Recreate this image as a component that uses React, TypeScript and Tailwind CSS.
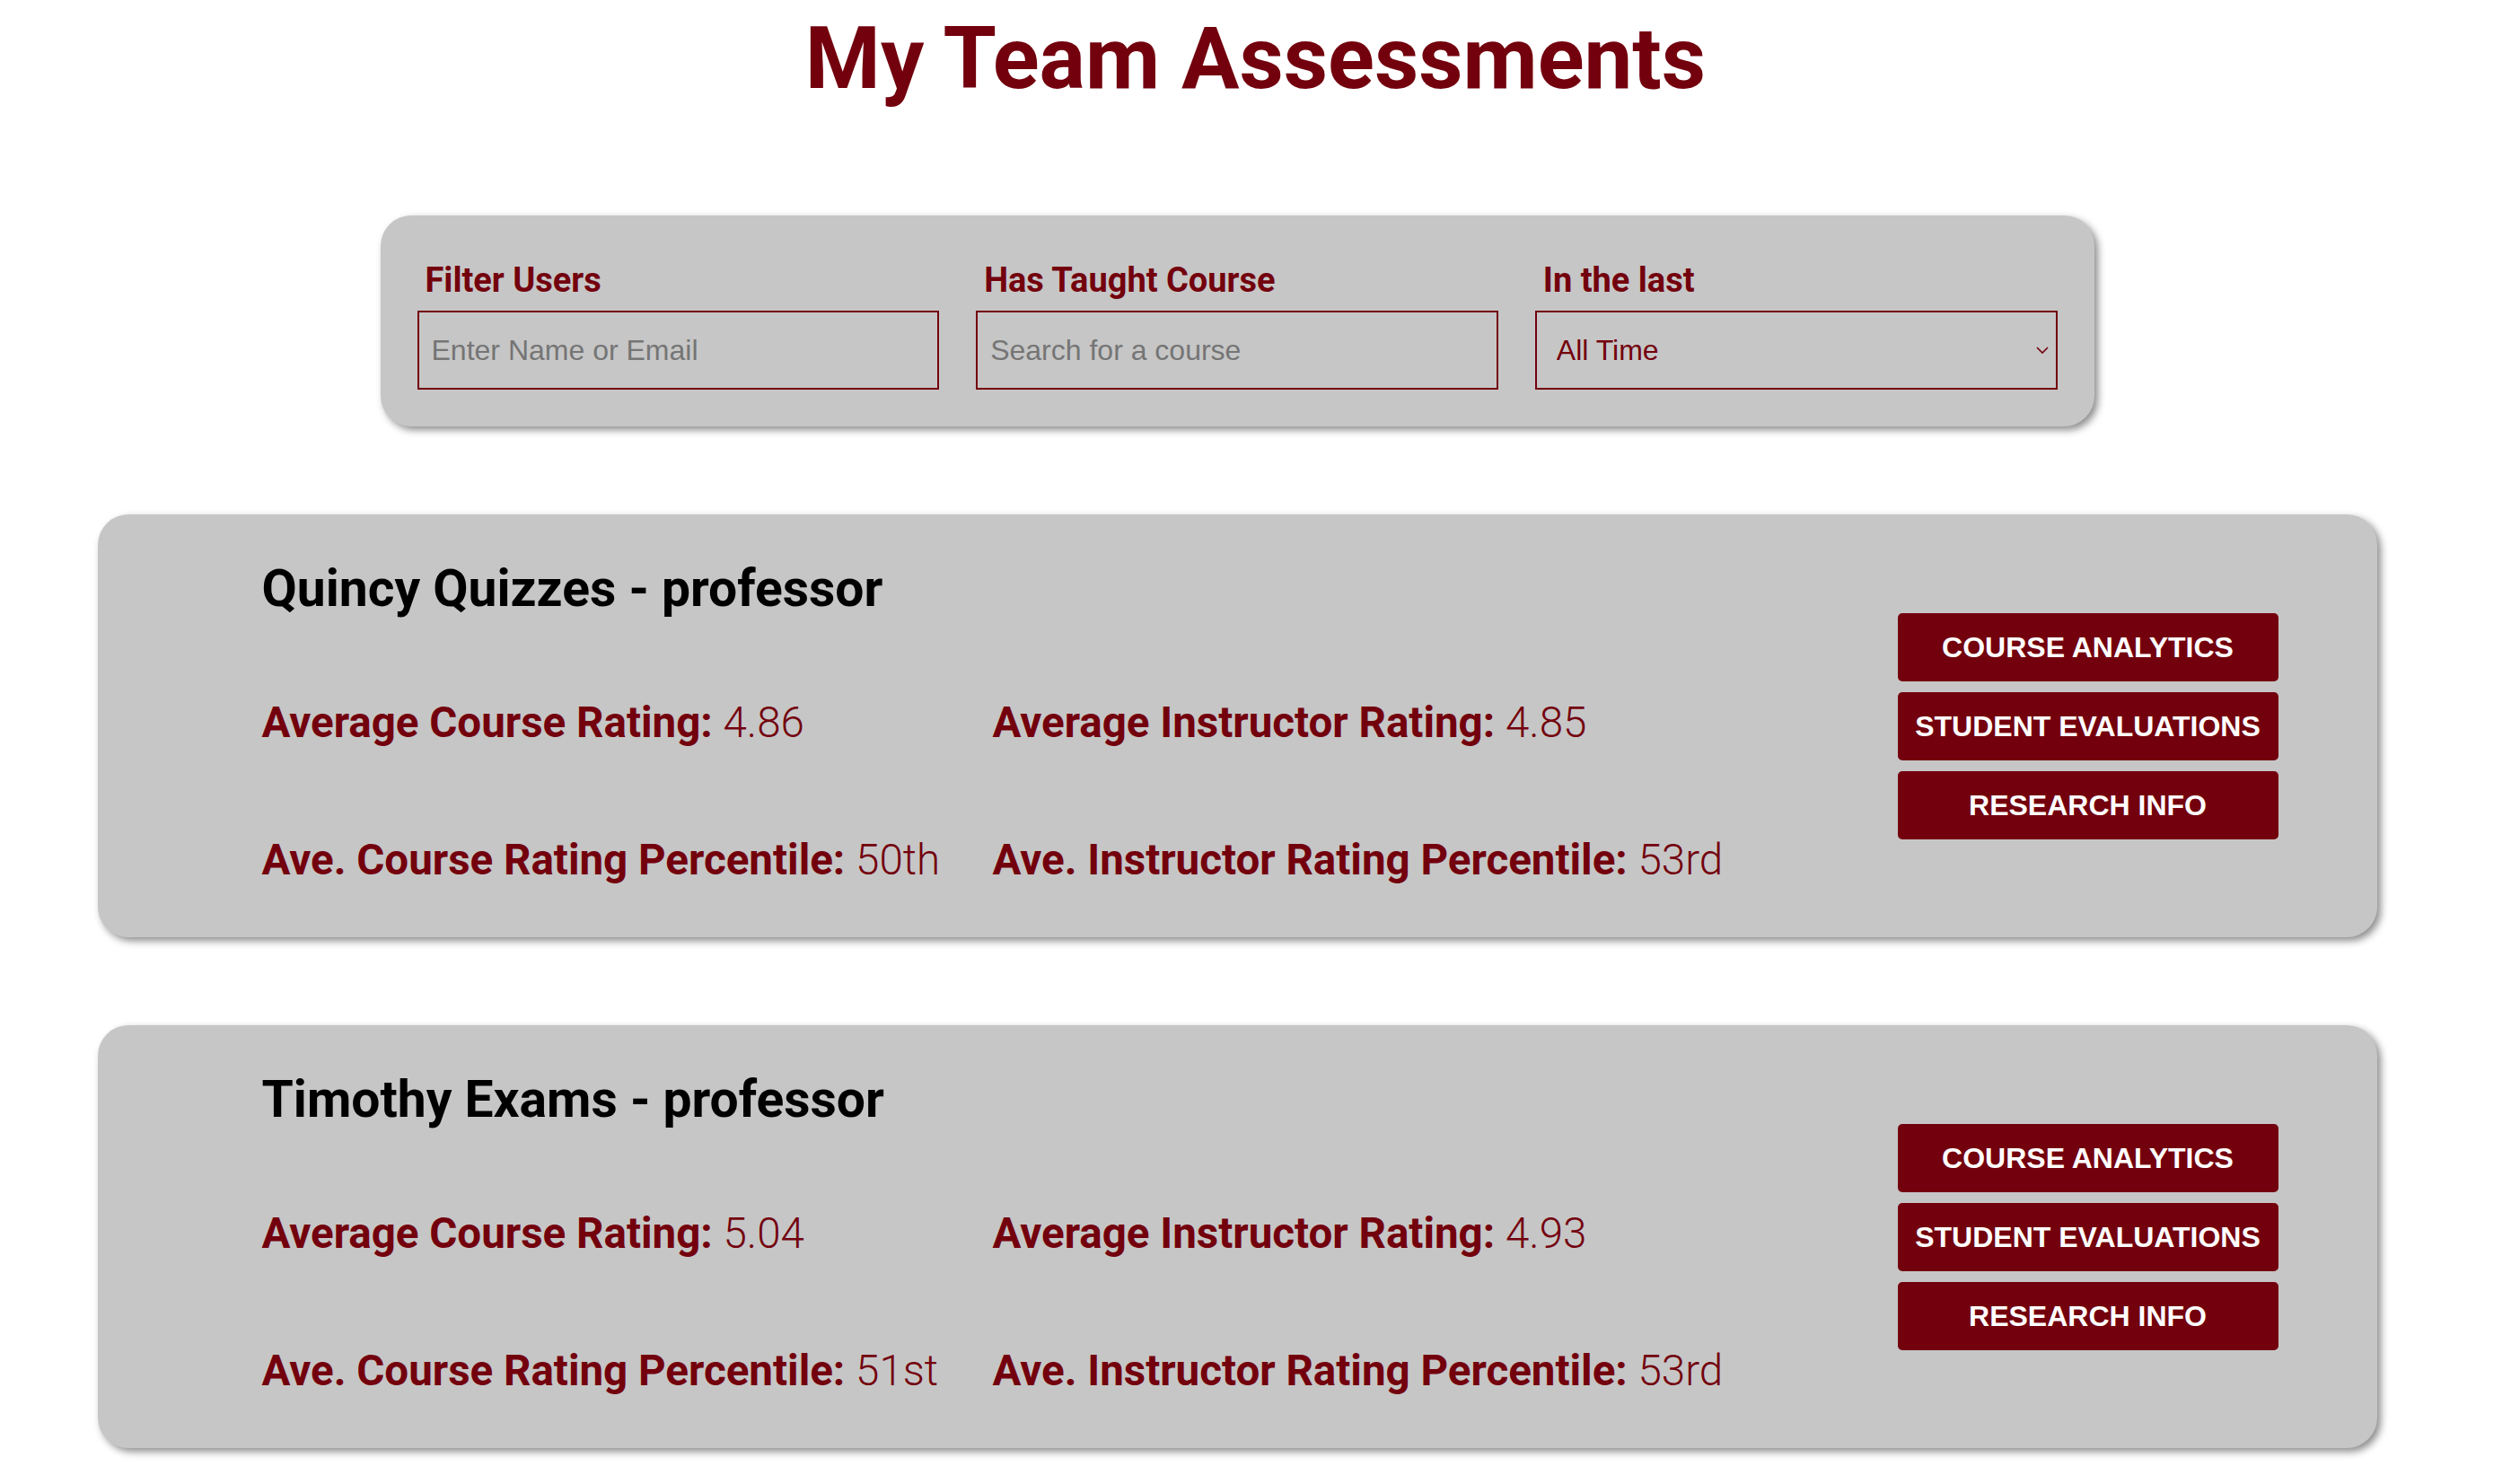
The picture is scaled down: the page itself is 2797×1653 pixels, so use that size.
import React from 'react';

interface Member {
  name: string;
  course: string;
  instructor: string;
  coursePct: string;
  instructorPct: string;
}

const members: Member[] = [
  { name: 'Quincy Quizzes - professor', course: '4.86', instructor: '4.85', coursePct: '50th', instructorPct: '53rd' },
  { name: 'Timothy Exams - professor', course: '5.04', instructor: '4.93', coursePct: '51st', instructorPct: '53rd' },
];

const Stat: React.FC<{ label: string; value: string }> = ({ label, value }) => (
  <p className="text-[47.5px] leading-none text-[#73000d] whitespace-nowrap">
    <span className="font-bold">{label}</span> <span className="font-light">{value}</span>
  </p>
);

const MemberCard: React.FC<{ member: Member }> = ({ member }) => (
  <div className="mx-auto flex h-[471px] w-[2539px] rounded-[34px] bg-[#c6c6c6] pl-[183px] pr-[110px] shadow-[4px_4px_8px_rgba(0,0,0,0.45)]">
    <div className="flex-1 pt-[54px]">
      <h2 className="text-[57px] font-bold leading-none text-black">{member.name}</h2>
      <div className="mt-[98px] grid grid-cols-[814px_auto] gap-y-[105px]">
        <Stat label="Average Course Rating:" value={member.course} />
        <Stat label="Average Instructor Rating:" value={member.instructor} />
        <Stat label="Ave. Course Rating Percentile:" value={member.coursePct} />
        <Stat label="Ave. Instructor Rating Percentile:" value={member.instructorPct} />
      </div>
    </div>
    <div className="flex flex-col gap-[12px] self-center [font-family:'Liberation_Sans',Arial,sans-serif]">
      {['Course Analytics', 'Student Evaluations', 'Research Info'].map((b) => (
        <button
          key={b}
          className="h-[76px] w-[424px] rounded-[5px] bg-[#73000d] text-[32px] font-bold uppercase text-white"
        >
          {b}
        </button>
      ))}
    </div>
  </div>
);

export default function App() {
  return (
    <div className="min-h-screen bg-white pb-[40px] [font-family:Roboto,'Liberation_Sans',sans-serif]">
      <h1 className="pt-[17px] text-center text-[96px] font-bold leading-none text-[#73000d]">
        My Team Assessments
      </h1>

      <div className="mt-[127px] flex flex-col gap-[98px] pr-[41px]">
        {/* Filters */}
        <div className="mx-auto grid w-[1909px] grid-cols-3 gap-x-[41px] rounded-[34px] bg-[#c6c6c6] px-[41px] pt-[53px] pb-[41px] shadow-[4px_4px_8px_rgba(0,0,0,0.45)]">
          <div>
            <label className="mb-[15px] ml-[9px] block text-[38px] font-bold leading-none text-[#73000d]">Filter Users</label>
            <input
              placeholder="Enter Name or Email"
              className="h-[88px] w-full border-2 border-[#73000d] bg-transparent pl-[14px] text-[32px] text-[#73000d] outline-none placeholder:text-[#757575] [font-family:'Liberation_Sans',Arial,sans-serif]"
            />
          </div>
          <div>
            <label className="mb-[15px] ml-[9px] block text-[38px] font-bold leading-none text-[#73000d]">Has Taught Course</label>
            <input
              placeholder="Search for a course"
              className="h-[88px] w-full border-2 border-[#73000d] bg-transparent pl-[14px] text-[32px] text-[#73000d] outline-none placeholder:text-[#757575] [font-family:'Liberation_Sans',Arial,sans-serif]"
            />
          </div>
          <div>
            <label className="mb-[15px] ml-[9px] block text-[38px] font-bold leading-none text-[#73000d]">In the last</label>
            <div className="relative">
              <select className="h-[88px] w-full appearance-none border-2 border-[#73000d] bg-transparent pl-[22px] text-[32px] text-[#73000d] outline-none [font-family:'Liberation_Sans',Arial,sans-serif]">
                <option>All Time</option>
                <option>Year</option>
                <option>Semester</option>
              </select>
              <svg
                className="pointer-events-none absolute right-[9px] top-1/2 -translate-y-1/2"
                width="16"
                height="10"
                viewBox="0 0 16 10"
                fill="none"
                stroke="#73000d"
                strokeWidth="1.6"
              >
                <path d="M2 2l6 6 6-6" />
              </svg>
            </div>
          </div>
        </div>

        {members.map((m) => (
          <MemberCard key={m.name} member={m} />
        ))}
      </div>
    </div>
  );
}
